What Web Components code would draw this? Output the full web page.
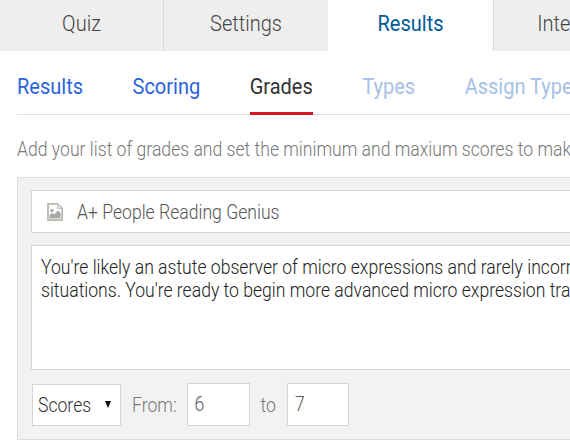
<!DOCTYPE html>
<html>
<head>
<meta charset="utf-8">
<style>
html, body { margin: 0; padding: 0; background: #fff; overflow: hidden; height: 446px; }
body { font-family: Roboto, "Liberation Sans", sans-serif; }
</style>
</head>
<body>
<quiz-tabs></quiz-tabs>
<sub-nav></sub-nav>
<p-intro>Add your list of grades and set the minimum and maxium scores to make each grade</p-intro>
<grade-card></grade-card>

<script>
// the reference font is hinted taller than it renders here
const tall = 'display: inline-block; transform: scaleY(1.12);';

class QuizTabs extends HTMLElement {
    connectedCallback() {
        this.attachShadow({ mode: 'open' });
        this.shadowRoot.innerHTML = `
            <style>
                :host { display: flex; height: 51px; width: 700px; background: #eee; font-weight: 300; font-size: 20px; color: #444; }
                div { width: 163px; flex: none; border-right: 1px solid #d8d8d8; line-height: 47px; text-align: center; }
                div span { ${tall} }
                .two { width: 164px; border-right: 0; }
                .on { width: 165px; background: #fff; color: #005a96; font-weight: 400; }
                .last { width: 191px; border-right: 0; }
            </style>
            <div><span>Quiz</span></div>
            <div class="two"><span>Settings</span></div>
            <div class="on"><span>Results</span></div>
            <div class="last"><span>Integrations</span></div>
        `;
    }
}
customElements.define('quiz-tabs', QuizTabs);

class SubNav extends HTMLElement {
    connectedCallback() {
        this.attachShadow({ mode: 'open' });
        this.shadowRoot.innerHTML = `
            <style>
                :host { display: flex; height: 63px; width: 700px; margin-left: 17px; gap: 49.500px; border-bottom: 1px solid #e2e2e2; font-size: 20px; color: #2b63d9; }
                a { line-height: 71px; height: 64px; box-sizing: border-box; }
                a span { ${tall} }
                .on { color: #333; border-bottom: 3px solid #d7141f; }
                .off { color: #a6c1e8; }
            </style>
            <a><span>Results</span></a><a><span>Scoring</span></a><a class="on"><span>Grades</span></a><a class="off"><span>Types</span></a><a class="off"><span>Assign Types</span></a>
        `;
    }
}
customElements.define('sub-nav', SubNav);

class PIntro extends HTMLElement {
    connectedCallback() {
        this.attachShadow({ mode: 'open' });
        this.shadowRoot.innerHTML = `
            <style>
                :host { display: block; width: 800px; margin: 20px 0 0 17px; height: 42px; white-space: nowrap; font-size: 17.600px; font-weight: 300; line-height: 28px; color: #777; }
                span { ${tall} }
            </style>
            <span><slot></slot></span>
        `;
    }
}
customElements.define('p-intro', PIntro);

class GradeCard extends HTMLElement {
    connectedCallback() {
        this.attachShadow({ mode: 'open' });
        this.shadowRoot.innerHTML = `
            <style>
                :host { display: block; box-sizing: border-box; width: 700px; height: 263px; margin-left: 17px; padding: 12px 13px; background: #f2f2f2; border: 1px solid #ddd; font-weight: 300; font-size: 17.600px; }
                span { ${tall} }
                .title { display: flex; align-items: center; gap: 14px; box-sizing: border-box; height: 43px; padding-left: 15px; background: #fff; border: 1px solid #d4d4d4; color: #555; }
                svg { display: block; flex: none; }
                .text { box-sizing: border-box; height: 125px; margin-top: 12px; padding: 10px 9px 11px 9px; background: #fff; border: 1px solid #d4d4d4; line-height: 23px; color: #222; white-space: nowrap; }
                .row { display: flex; align-items: center; margin-top: 13px; color: #777; }
                .sel { display: flex; align-items: center; justify-content: space-between; box-sizing: border-box; width: 89px; height: 42px; padding: 0 5px 0 5px; margin-left: 1px; background: #fff; border: 1px solid #d4d4d4; color: #333; }
                .sel i { width: 0; height: 0; border: 3.500px solid transparent; border-top: 7px solid #111; border-bottom: 0; margin-right: 4px; }
                .num { box-sizing: border-box; height: 43px; padding-left: 7px; background: #fff; border: 1px solid #d4d4d4; line-height: 41px; color: #555; }
                .from { margin: 0 10px 0 11px; }
                .to { margin: 0 11px; }
            </style>
            <div class="title">
                <svg width="16" height="18" viewBox="0 0 16 18"><path d="M1 .8h9.500L15.200 5.500V17.200H1Z" fill="#fff" stroke="#bdb6af" stroke-width="1.800"/><path d="M10.500 1v4.500h4.500" fill="#e4e4e4" stroke="#c0c0c0"/><path d="M2.500 15.500V12l2.700-2.300 2 1.700 3.800-4 2.600 2.600v5.500Z" fill="#a8a8a8"/><circle cx="5" cy="7.500" r="1.700" fill="#a8a8a8"/></svg>
                <span>A+ People Reading Genius</span>
            </div>
            <div class="text"><span>You're likely an astute observer of micro expressions and rarely incorrectly read people in most</span><br><span>situations. You're ready to begin more advanced micro expression training with confidence.</span></div>
            <div class="row">
                <div class="sel"><span>Scores</span><i></i></div>
                <span class="from">From:</span>
                <div class="num" style="width:63px"><span>6</span></div>
                <span class="to">to</span>
                <div class="num" style="width:62px"><span>7</span></div>
            </div>
        `;
    }
}
customElements.define('grade-card', GradeCard);
</script>
</body>
</html>
